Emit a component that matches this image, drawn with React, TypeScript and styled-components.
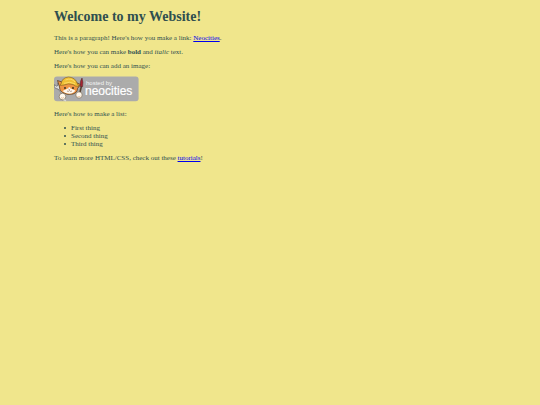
import React from "react";
import styled, { createGlobalStyle } from "styled-components";

const GlobalStyle = createGlobalStyle`
  body {
    margin: 0;
    background: #f0e68c;
    color: #2f4f4f;
    font-family: "Liberation Serif", "Times New Roman", serif;
    font-size: 7px;
    line-height: 8px;
  }
`;

const Page = styled.main`
  width: 80%;
  margin: 0 auto;
  padding: 9px 0;
`;

const Title = styled.h1`
  margin: 0 0 9px;
  font-size: 14px;
  line-height: 16px;
`;

const Paragraph = styled.p`
  margin: 0 0 6px;
`;

const Link = styled.a`
  color: #0000ee;
  text-decoration: underline;
`;

const BadgeLink = styled.a`
  display: block;
  width: 85px;
  height: 26px;
  margin: 0 0 8px;
`;

const List = styled.ul`
  margin: 0 0 6px;
  padding: 0 0 0 10px;
  list-style: none;
`;

const Item = styled.li`
  display: flex;
  align-items: center;
  gap: 5px;

  &::before {
    content: "";
    width: 2px;
    height: 2px;
    border-radius: 50%;
    background: currentColor;
  }
`;

const Badge = () => (
  <svg width="85" height="26" viewBox="0 0 85 26" role="img" aria-label="hosted by neocities">
    <rect x="0" y="0.4" width="84.6" height="24.8" rx="3" fill="#ababab" />
    {/* wrench and left arm */}
    <path d="M.6 8.600 2.400 10.200 4 9.400 3.600 7.400Q6.200 8 6 11L10.500 16.500 8.600 18.300 4 13Q.8 13 .3 10.500Z" fill="#dcdcda" stroke="#555" strokeWidth=".6" />
    {/* ears and face */}
    <path d="M5.500 11 3.500 4.500 8 6Q14-1 21 6l5.500 2.500-3 4q0 4-4.500 5.500-6 1.500-10.500-1.500Q5 14.500 5.500 11Z" fill="#ee9443" stroke="#4a3520" strokeWidth=".7" />
    <path d="M13.800 12.500q1.500-2.500 3 0l4.500 2q-1.500 3-6 3.300Q11 17.500 8.500 15Z" fill="#fff8ee" />
    {/* hard hat */}
    <path d="M7 8Q8 1.500 14.500 1 21.500 1.300 23.500 8l1.500 2.500q-4 0-6-2-5-1.500-9 .5L5.500 9.500Z" fill="#f0c035" stroke="#80601e" strokeWidth=".6" />
    <path d="M11.500 4q6-2.500 9.500 2M10 7.300q6-2.300 11 .5" fill="none" stroke="#ffe271" strokeWidth=".8" />
    <circle cx="11" cy="12" r=".9" fill="#282622" />
    <circle cx="19" cy="12" r=".9" fill="#282622" />
    <path d="m14.300 12.800 1 .9 1-.9M13 15q1.500 1 2.300-.5 1.200 1.500 2.700.5" fill="none" stroke="#6b4434" strokeWidth=".5" />
    {/* paintbrush */}
    <path d="M25.500 18 27.500 10" stroke="#54402f" strokeWidth="1.500" />
    <path d="M26.300 10.500Q25.600 5 28 2q1.600 4 .6 8.700Z" fill="#a52431" stroke="#492b2b" strokeWidth=".5" />
    {/* paws */}
    <circle cx="8.500" cy="20.500" r="3.300" fill="#fff9ef" stroke="#6c5a45" strokeWidth=".6" />
    <path d="M9.500 23.500 12 25" stroke="#dcdcda" strokeWidth="1.200" />
    <circle cx="25" cy="19" r="3.200" fill="#fff9ef" stroke="#6c5a45" strokeWidth=".6" />
    <path d="M7 21.500q1.500 1.500 3 0M23.500 20.500q1.500 1 3-.5" fill="none" stroke="#d7a06a" strokeWidth=".6" />
    <text x="32" y="9" fill="#f4f4f4" fontFamily="Liberation Sans, sans-serif" fontSize="6">hosted by</text>
    <text x="31" y="19" fill="#ffffff" stroke="#ffffff" strokeWidth=".2" fontFamily="Liberation Sans, sans-serif" fontSize="12">neocities</text>
  </svg>
);

export default function App() {
  return (
    <>
      <GlobalStyle />
      <Page>
        <Title>Welcome to my Website!</Title>
        <Paragraph>
          This is a paragraph! Here's how you make a link:{" "}
          <Link href="https://neocities.org">Neocities</Link>.
        </Paragraph>
        <Paragraph>
          Here's how you can make <strong>bold</strong> and <em>italic</em> text.
        </Paragraph>
        <Paragraph>Here's how you can add an image:</Paragraph>
        <BadgeLink href="https://neocities.org">
          <Badge />
        </BadgeLink>
        <Paragraph>Here's how to make a list:</Paragraph>
        <List>
          <Item>First thing</Item>
          <Item>Second thing</Item>
          <Item>Third thing</Item>
        </List>
        <Paragraph>
          To learn more HTML/CSS, check out these{" "}
          <Link href="https://neocities.org/tutorials">tutorials</Link>!
        </Paragraph>
      </Page>
    </>
  );
}
